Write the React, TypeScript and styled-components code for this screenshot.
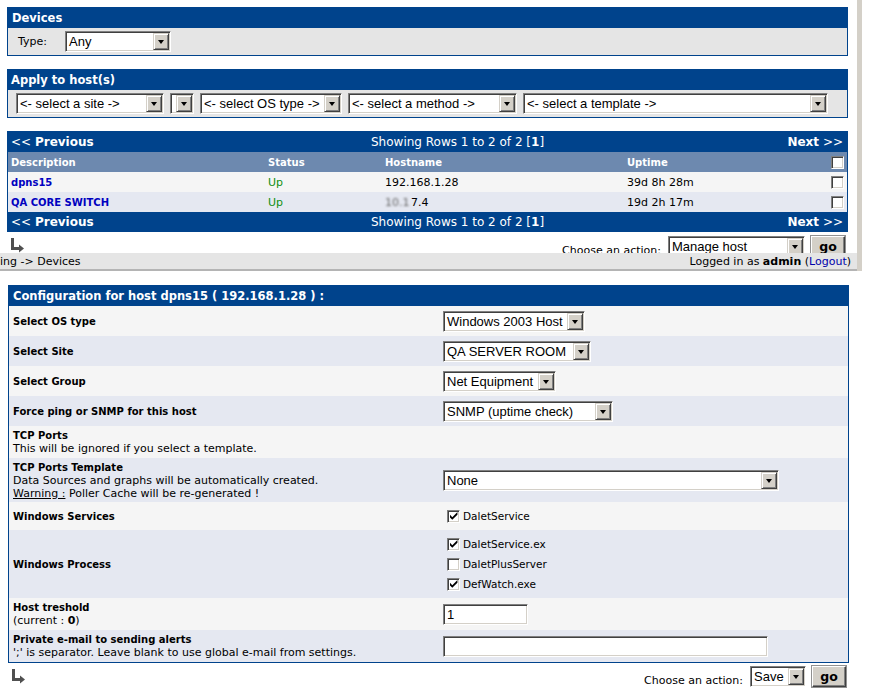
import React from "react";
import styled, { createGlobalStyle } from "styled-components";

const BLUE = "#00438c";

const Global = createGlobalStyle`
  html, body { margin: 0; padding: 0; background: #fff; }
  body { font-family: "DejaVu Sans", Verdana, sans-serif; font-size: 11px; color: #000; }
  * { box-sizing: border-box; }
`;

const Page = styled.div`
  width: 890px;
  height: 700px;
  overflow: hidden;
  background: #fff;
`;

/* ---------- top window ---------- */
const TopWindow = styled.div`
  width: 862px;
  border-right: 5px solid #d4d0c8;
  display: flex;
  flex-direction: column;
`;

const TopContent = styled.div`
  display: flex;
  flex-direction: column;
  padding: 7px 9px 0 7px;
`;

const Panel = styled.div<{ $mt?: number }>`
  border: 1px solid ${BLUE};
  margin-top: ${(p) => p.$mt ?? 0}px;
`;

const PanelHeader = styled.div<{ $pl?: number }>`
  height: 20px;
  background: ${BLUE};
  color: #fff;
  font-weight: bold;
  font-size: 11.5px;
  display: flex;
  align-items: center;
  padding-left: ${(p) => p.$pl ?? 3}px;
`;

const PanelBody = styled.div<{ $pl: number; $gap: number }>`
  height: 27px;
  background: #e5e5e5;
  display: flex;
  align-items: center;
  padding-left: ${(p) => p.$pl}px;
  gap: ${(p) => p.$gap}px;
`;

const FieldLabel = styled.span`
  font-size: 11px;
`;

/* classic select */
const SelectBox = styled.div<{ $w: number }>`
  width: ${(p) => p.$w}px;
  height: 21px;
  flex: none;
  display: flex;
  align-items: stretch;
  background: #fff;
  border: 1px solid;
  border-color: #808080 #fff #fff #808080;
  box-shadow: inset 1px 1px 0 #404040, inset -1px -1px 0 #d4d0c8;
  padding: 1px;
`;

const SelectText = styled.span`
  flex: 1;
  min-width: 0;
  overflow: hidden;
  white-space: nowrap;
  font-family: "Liberation Sans", Arial, sans-serif;
  font-size: 13px;
  line-height: 17px;
  padding-left: 2px;
`;

const ArrowBtn = styled.span`
  width: 16px;
  flex: none;
  background: #d4d0c8;
  border: 1px solid;
  border-color: #d4d0c8 #404040 #404040 #d4d0c8;
  box-shadow: inset 1px 1px 0 #fff, inset -1px -1px 0 #808080;
  display: flex;
  align-items: center;
  justify-content: center;
  &::after {
    content: "";
    border-left: 3.5px solid transparent;
    border-right: 3.5px solid transparent;
    border-top: 4px solid #000;
    margin-top: 1px;
  }
`;

const Select = ({ w, value }: { w: number; value: string }) => (
  <SelectBox $w={w}>
    <SelectText>{value}</SelectText>
    <ArrowBtn />
  </SelectBox>
);

const TextBox = styled.div<{ $w: number }>`
  width: ${(p) => p.$w}px;
  height: 21px;
  background: #fff;
  border: 1px solid;
  border-color: #808080 #fff #fff #808080;
  box-shadow: inset 1px 1px 0 #404040, inset -1px -1px 0 #d4d0c8;
  font-family: "Liberation Sans", Arial, sans-serif;
  font-size: 13px;
  line-height: 19px;
  padding-left: 3px;
`;

const CheckBoxBox = styled.span`
  width: 13px;
  height: 13px;
  flex: none;
  background: #fff;
  border: 1px solid;
  border-color: #808080 #fff #fff #808080;
  box-shadow: inset 1px 1px 0 #404040, inset -1px -1px 0 #d4d0c8;
  display: flex;
  align-items: center;
  justify-content: center;
`;

const CheckBox = ({ checked }: { checked?: boolean }) => (
  <CheckBoxBox>
    {checked && (
      <svg width="8" height="8" viewBox="0 0 7 7">
        <path d="M0 2.5 L2 4.5 L6.5 0 L6.5 2.3 L2 6.8 L0 4.8 Z" fill="#000" />
      </svg>
    )}
  </CheckBoxBox>
);

/* rows table */
const RowsPanel = styled.div`
  margin-top: 13px;
  border-left: 1px solid ${BLUE};
  border-right: 1px solid ${BLUE};
`;

const NavRow = styled.div<{ $h: number }>`
  height: ${(p) => p.$h}px;
  background: ${BLUE};
  color: #fff;
  font-size: 12px;
  display: grid;
  grid-template-columns: 360px 1fr auto;
  align-items: center;
  padding: 0 4px 0 3px;
  b { font-weight: bold; }
`;

const GridRow = styled.div<{ $bg: string }>`
  height: 20px;
  background: ${(p) => p.$bg};
  display: grid;
  grid-template-columns: 257px 117px 242px 1fr 16px;
  align-items: center;
`;

const Cell = styled.span`
  padding-left: 3px;
  white-space: nowrap;
`;

const HeadCell = styled(Cell)`
  color: #fff;
  font-weight: bold;
  font-size: 10px;
`;

const LinkCell = styled(Cell)`
  color: #0000c0;
  font-weight: bold;
  font-size: 10px;
`;

const UpCell = styled(Cell)`
  color: #109010;
`;

const Blur = styled.span`
  display: inline-block;
  filter: blur(1.3px);
  color: #666;
  width: 26px;
  overflow: visible;
`;

const CheckCell = styled.span`
  display: flex;
  justify-content: flex-start;
`;

/* action bar */
const ActionClip = styled.div`
  height: 21px;
  overflow: hidden;
  display: flex;
  justify-content: space-between;
  align-items: flex-start;
  padding: 0 3px 0 4px;
`;

const ArrowIcon = styled.svg<{ $mt: number }>`
  margin-top: ${(p) => p.$mt}px;
  flex: none;
`;

const ActionBar = styled.div<{ $mt: number }>`
  margin-top: ${(p) => p.$mt}px;
  display: flex;
  align-items: flex-end;
  gap: 6px;
`;

const ActionText = styled.span`
  font-size: 11px;
  line-height: 13px;
  margin-right: 1px;
`;

const GoButton = styled.div`
  width: 34px;
  height: 21px;
  background: #d4d0c8;
  border: 1px solid;
  border-color: #fff #404040 #404040 #fff;
  box-shadow: inset -1px -1px 0 #808080, 0 0 0 1px #909090;
  font-weight: bold;
  font-size: 12.5px;
  display: flex;
  align-items: center;
  justify-content: center;
`;

const Arrow = ({ mt }: { mt: number }) => (
  <ArrowIcon $mt={mt} width="14" height="15" viewBox="0 0 14 15">
    <rect x="0" y="0" width="3" height="12" fill="#505050" />
    <rect x="0" y="9" width="9" height="3" fill="#505050" />
    <polygon points="8,6.5 13,10.5 8,14.5" fill="#505050" />
  </ArrowIcon>
);

const Footer = styled.div`
  height: 18px;
  background: #e5e5e5;
  border-bottom: 2px solid #b4b4b4;
  display: flex;
  justify-content: space-between;
  align-items: center;
  padding-right: 6px;
  font-size: 11px;
  b { font-weight: bold; }
`;

const LogoutLink = styled.span`
  color: #0000aa;
`;

/* ---------- configuration ---------- */
const ConfigPanel = styled.div`
  margin: 14px 0 0 8px;
  width: 841px;
  border: 1px solid ${BLUE};
`;

const ConfigRow = styled.div<{ $h: number; $alt?: boolean }>`
  height: ${(p) => p.$h}px;
  background: ${(p) => (p.$alt ? "#e5e8f1" : "#f5f5f5")};
  display: grid;
  grid-template-columns: 434px 1fr;
`;

const LabelCell = styled.div`
  padding-left: 4px;
  display: flex;
  flex-direction: column;
  justify-content: center;
`;

const Label = styled.span`
  font-weight: bold;
  font-size: 10px;
  line-height: 13px;
`;

const Desc = styled.span`
  font-size: 11px;
  line-height: 13px;
  u { text-decoration: underline; }
`;

const FieldCell = styled.div`
  display: flex;
  flex-direction: column;
  justify-content: center;
  align-items: flex-start;
`;

const CheckItem = styled.label`
  height: 20px;
  display: flex;
  align-items: center;
  gap: 3px;
  padding-left: 4px;
  font-size: 10.5px;
`;

const BottomActions = styled.div`
  width: 846px;
  display: flex;
  justify-content: space-between;
  align-items: flex-start;
  padding-left: 12px;
`;

const hostRows = [
  { d: "dpns15", h: "192.168.1.28", u: "39d 8h 28m", bg: "#f5f5f5" },
  { d: "QA CORE SWITCH", h: "", u: "19d 2h 17m", bg: "#e5e8f1" },
];

const Nav = ({ h }: { h: number }) => (
  <NavRow $h={h}>
    <span>
      &lt;&lt; <b>Previous</b>
    </span>
    <span>
      Showing Rows 1 to 2 of 2 [<b>1</b>]
    </span>
    <span>
      <b>Next</b> &gt;&gt;
    </span>
  </NavRow>
);

export default function App() {
  return (
    <Page>
      <Global />
      <TopWindow>
        <TopContent>
          <Panel>
            <PanelHeader $pl={4}>Devices</PanelHeader>
            <PanelBody $pl={10} $gap={18}>
              <FieldLabel>Type:</FieldLabel>
              <Select w={106} value="Any" />
            </PanelBody>
          </Panel>

          <Panel $mt={13}>
            <PanelHeader>Apply to host(s)</PanelHeader>
            <PanelBody $pl={8} $gap={6}>
              <Select w={148} value="<- select a site ->" />
              <Select w={24} value="" />
              <Select w={142} value="<- select OS type ->" />
              <Select w={169} value="<- select a method ->" />
              <Select w={305} value="<- select a template ->" />
            </PanelBody>
          </Panel>

          <RowsPanel>
            <Nav h={21} />
            <GridRow $bg="#6d89af">
              <HeadCell>Description</HeadCell>
              <HeadCell>Status</HeadCell>
              <HeadCell>Hostname</HeadCell>
              <HeadCell>Uptime</HeadCell>
              <CheckCell>
                <CheckBox />
              </CheckCell>
            </GridRow>
            {hostRows.map((r) => (
              <GridRow key={r.d} $bg={r.bg}>
                <LinkCell>{r.d}</LinkCell>
                <UpCell>Up</UpCell>
                <Cell>
                  {r.h || (
                    <>
                      <Blur>10.1</Blur>7.4
                    </>
                  )}
                </Cell>
                <Cell>{r.u}</Cell>
                <CheckCell>
                  <CheckBox />
                </CheckCell>
              </GridRow>
            ))}
            <Nav h={20} />
          </RowsPanel>

          <ActionClip>
            <Arrow mt={6} />
            <ActionBar $mt={4}>
              <ActionText>Choose an action:</ActionText>
              <Select w={137} value="Manage host" />
              <GoButton>go</GoButton>
            </ActionBar>
          </ActionClip>
        </TopContent>
        <Footer>
          <span>ing -&gt; Devices</span>
          <span>
            Logged in as <b>admin</b> (<LogoutLink>Logout</LogoutLink>)
          </span>
        </Footer>
      </TopWindow>

      <ConfigPanel>
        <PanelHeader $pl={4}>Configuration for host dpns15 ( 192.168.1.28 ) :</PanelHeader>
        <ConfigRow $h={30}>
          <LabelCell>
            <Label>Select OS type</Label>
          </LabelCell>
          <FieldCell>
            <Select w={142} value="Windows 2003 Host" />
          </FieldCell>
        </ConfigRow>
        <ConfigRow $h={30} $alt>
          <LabelCell>
            <Label>Select Site</Label>
          </LabelCell>
          <FieldCell>
            <Select w={148} value="QA SERVER ROOM" />
          </FieldCell>
        </ConfigRow>
        <ConfigRow $h={30}>
          <LabelCell>
            <Label>Select Group</Label>
          </LabelCell>
          <FieldCell>
            <Select w={113} value="Net Equipment" />
          </FieldCell>
        </ConfigRow>
        <ConfigRow $h={30} $alt>
          <LabelCell>
            <Label>Force ping or SNMP for this host</Label>
          </LabelCell>
          <FieldCell>
            <Select w={170} value="SNMP (uptime check)" />
          </FieldCell>
        </ConfigRow>
        <ConfigRow $h={32}>
          <LabelCell>
            <Label>TCP Ports</Label>
            <Desc>This will be ignored if you select a template.</Desc>
          </LabelCell>
          <FieldCell />
        </ConfigRow>
        <ConfigRow $h={44} $alt>
          <LabelCell>
            <Label>TCP Ports Template</Label>
            <Desc>Data Sources and graphs will be automatically created.</Desc>
            <Desc>
              <u>Warning :</u> Poller Cache will be re-generated !
            </Desc>
          </LabelCell>
          <FieldCell>
            <Select w={336} value="None" />
          </FieldCell>
        </ConfigRow>
        <ConfigRow $h={28}>
          <LabelCell>
            <Label>Windows Services</Label>
          </LabelCell>
          <FieldCell>
            <CheckItem>
              <CheckBox checked />
              DaletService
            </CheckItem>
          </FieldCell>
        </ConfigRow>
        <ConfigRow $h={68} $alt>
          <LabelCell>
            <Label>Windows Process</Label>
          </LabelCell>
          <FieldCell>
            <CheckItem>
              <CheckBox checked />
              DaletService.ex
            </CheckItem>
            <CheckItem>
              <CheckBox />
              DaletPlusServer
            </CheckItem>
            <CheckItem>
              <CheckBox checked />
              DefWatch.exe
            </CheckItem>
          </FieldCell>
        </ConfigRow>
        <ConfigRow $h={32}>
          <LabelCell>
            <Label>Host treshold</Label>
            <Desc>
              (current : <b>0</b>)
            </Desc>
          </LabelCell>
          <FieldCell>
            <TextBox $w={85}>1</TextBox>
          </FieldCell>
        </ConfigRow>
        <ConfigRow $h={32} $alt>
          <LabelCell>
            <Label>Private e-mail to sending alerts</Label>
            <Desc>';' is separator. Leave blank to use global e-mail from settings.</Desc>
          </LabelCell>
          <FieldCell>
            <TextBox $w={325} />
          </FieldCell>
        </ConfigRow>
      </ConfigPanel>

      <BottomActions>
        <Arrow mt={6} />
        <ActionBar $mt={3}>
          <ActionText>Choose an action:</ActionText>
          <Select w={56} value="Save" />
          <GoButton>go</GoButton>
        </ActionBar>
      </BottomActions>
    </Page>
  );
}
